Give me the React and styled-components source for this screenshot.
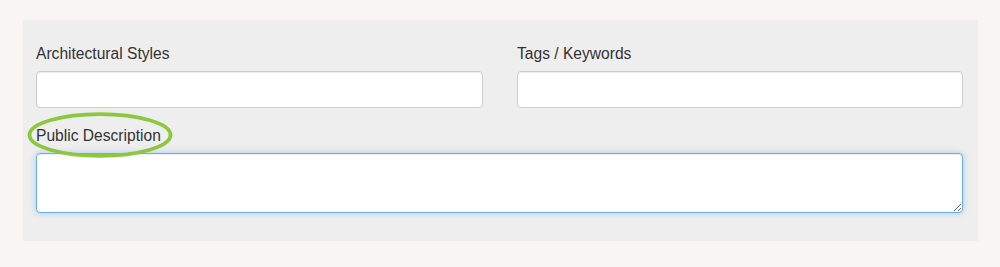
import React from 'react'
import styled, { createGlobalStyle } from 'styled-components'

const GlobalStyle = createGlobalStyle`
  html, body {
    margin: 0;
    padding: 0;
    background: #faf5f5;
  }
  * {
    box-sizing: border-box;
  }
`

function App() {
  return (
    <Page>
      <GlobalStyle />
      <Panel>
        <Row>
          <Field>
            <Label>Architectural Styles</Label>
            <Input type='text' />
          </Field>
          <Field>
            <Label>Tags / Keywords</Label>
            <Input type='text' />
          </Field>
        </Row>
        <Field $spaced>
          <Label>
            Public Description
            <Circle viewBox='0 0 148 48' aria-hidden='true'>
              <ellipse cx='74' cy='24' rx='70.5' ry='20.8' />
            </Circle>
          </Label>
          <TextArea $focused />
        </Field>
      </Panel>
    </Page>
  )
}

export default App

const Page = styled.div`
  padding: 20px 22px 26px 23px;
  font-family: 'Liberation Sans', Arial, Helvetica, sans-serif;
`

const Panel = styled.div`
  background: #eeeeee;
  height: 221px;
  padding: 24px 15px 28px 13px;
`

const Row = styled.div`
  display: grid;
  grid-template-columns: 447px 446px;
  column-gap: 34px;
`

const Field = styled.div`
  display: flex;
  flex-direction: column;
  margin-top: ${p => (p.$spaced ? '18px' : '0')};
`

const Label = styled.label`
  position: relative;
  align-self: flex-start;
  font-size: 15.6px;
  line-height: 20px;
  color: #333333;
  margin-bottom: 7px;
`

const Circle = styled.svg`
  position: absolute;
  left: -10px;
  top: -15px;
  width: 148px;
  height: 48px;
  overflow: visible;
  pointer-events: none;

  ellipse {
    fill: none;
    stroke: #8dc63f;
    stroke-width: 3.8;
  }
`

const Input = styled.input`
  height: 37px;
  width: 100%;
  background: #ffffff;
  border: 1px solid #cccccc;
  border-radius: 4px;
  box-shadow: inset 0 1px 1px rgba(0, 0, 0, 0.075);
  outline: none;
`

const TextArea = styled.textarea`
  height: 60px;
  width: 100%;
  background: #ffffff;
  border: 1px solid ${p => (p.$focused ? '#66afe9' : '#cccccc')};
  border-radius: 4px;
  box-shadow: ${p =>
    p.$focused
      ? 'inset 0 1px 1px rgba(0,0,0,.075), 0 0 6px rgba(102,175,233,.55)'
      : 'inset 0 1px 1px rgba(0,0,0,.075)'};
  outline: none;
  resize: vertical;
`
